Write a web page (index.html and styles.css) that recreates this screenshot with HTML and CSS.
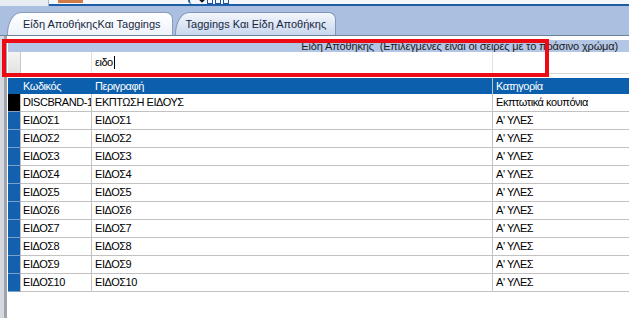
FILE: index.html
```html
<!doctype html>
<html>
<head>
<title>Είδη Αποθήκης</title>
<link rel="stylesheet" href="styles.css">
</head>
<body>
    <div class="top">
        <div class="top-left"></div>
        <div class="top-main">
            <span class="orange"></span>
            <span class="bend"></span>
            <span class="diamond"></span>
            <span class="sq"></span><span class="sq"></span><span class="sq"></span>
        </div>
    </div>
    <div class="tabstrip">
        <div class="tab active">Είδη ΑποθήκηςΚαι Taggings</div>
        <div class="tab">Taggings Και Είδη Αποθήκης</div>
    </div>
    <div class="frame">
        <div class="caption">Είδη Αποθήκης&nbsp; (Επιλεγμένες είναι οι σειρές με το πράσινο χρώμα)</div>
        <div class="grid filter">
            <div class="cell sel"></div>
            <div class="cell"></div>
            <div class="cell">ειδο<span class="caret"></span></div>
            <div class="cell last"></div>
        </div>
        <div class="gap"></div>
        <div class="grid head">
            <div class="cell ind"></div>
            <div class="cell">Κωδικός</div>
            <div class="cell">Περιγραφή</div>
            <div class="cell last">Κατηγορία</div>
        </div>
        <div class="grid row">
            <div class="cell ind current"></div>
            <div class="cell">DISCBRAND-1</div>
            <div class="cell">ΕΚΠΤΩΣΗ ΕΙΔΟΥΣ</div>
            <div class="cell last">Εκπτωτικά κουπόνια</div>
        </div>
        <div class="grid row">
            <div class="cell ind"></div>
            <div class="cell">ΕΙΔΟΣ1</div>
            <div class="cell">ΕΙΔΟΣ1</div>
            <div class="cell last">Α' ΥΛΕΣ</div>
        </div>
        <div class="grid row">
            <div class="cell ind"></div>
            <div class="cell">ΕΙΔΟΣ2</div>
            <div class="cell">ΕΙΔΟΣ2</div>
            <div class="cell last">Α' ΥΛΕΣ</div>
        </div>
        <div class="grid row">
            <div class="cell ind"></div>
            <div class="cell">ΕΙΔΟΣ3</div>
            <div class="cell">ΕΙΔΟΣ3</div>
            <div class="cell last">Α' ΥΛΕΣ</div>
        </div>
        <div class="grid row">
            <div class="cell ind"></div>
            <div class="cell">ΕΙΔΟΣ4</div>
            <div class="cell">ΕΙΔΟΣ4</div>
            <div class="cell last">Α' ΥΛΕΣ</div>
        </div>
        <div class="grid row">
            <div class="cell ind"></div>
            <div class="cell">ΕΙΔΟΣ5</div>
            <div class="cell">ΕΙΔΟΣ5</div>
            <div class="cell last">Α' ΥΛΕΣ</div>
        </div>
        <div class="grid row">
            <div class="cell ind"></div>
            <div class="cell">ΕΙΔΟΣ6</div>
            <div class="cell">ΕΙΔΟΣ6</div>
            <div class="cell last">Α' ΥΛΕΣ</div>
        </div>
        <div class="grid row">
            <div class="cell ind"></div>
            <div class="cell">ΕΙΔΟΣ7</div>
            <div class="cell">ΕΙΔΟΣ7</div>
            <div class="cell last">Α' ΥΛΕΣ</div>
        </div>
        <div class="grid row">
            <div class="cell ind"></div>
            <div class="cell">ΕΙΔΟΣ8</div>
            <div class="cell">ΕΙΔΟΣ8</div>
            <div class="cell last">Α' ΥΛΕΣ</div>
        </div>
        <div class="grid row">
            <div class="cell ind"></div>
            <div class="cell">ΕΙΔΟΣ9</div>
            <div class="cell">ΕΙΔΟΣ9</div>
            <div class="cell last">Α' ΥΛΕΣ</div>
        </div>
        <div class="grid row">
            <div class="cell ind"></div>
            <div class="cell">ΕΙΔΟΣ10</div>
            <div class="cell">ΕΙΔΟΣ10</div>
            <div class="cell last">Α' ΥΛΕΣ</div>
        </div>
    </div>
    <div class="highlight"></div>
</body>
</html>
```

FILE: styles.css
```css
html, body
{
    margin:0;
    padding:0;
}
body
{
    position:relative;
    width:629px;
    height:318px;
    overflow:hidden;
    background:#fff;
    font-family:"Liberation Sans", Arial, sans-serif;
    font-size:11px;
    color:#000;
}

/* top toolbar fragment */
.top
{
    display:flex;
    height:6px;
}
.top-left
{
    width:48px;
    background:#e8edf3;
    border-right:1px solid #a9b3c0;
}
.top-main
{
    flex:1;
    display:flex;
    align-items:flex-start;
    background:#f4f7fc;
    border-bottom:2px solid #1d5ca6;
}
.orange
{
    width:25px;
    height:3px;
    margin-left:9px;
    background:#d27a45;
}
.bend
{
    width:6px;
    height:4px;
    margin-left:105px;
    border-left:2px solid #1d5ca6;
    border-bottom-left-radius:4px;
}
.diamond
{
    width:4px;
    height:4px;
    margin:-2px 3px 0 4px;
    background:#111;
    transform:rotate(45deg);
}
.sq
{
    width:4px;
    height:3px;
    margin-right:2px;
    border:1px solid #1d4f9a;
    border-top:none;
}

/* tabs */
.tabstrip
{
    display:flex;
    align-items:flex-end;
    height:29px;
    padding-left:7px;
    background:#abc0e0;
    border-bottom:1px solid #6f819b;
}
.tab
{
    height:22px;
    line-height:22px;
    padding:0 9px 0 10px;
    margin-right:2px;
    font-size:11px;
    color:#15283f;
    background:linear-gradient(#f3f6fc, #c9d7ee);
    border:1px solid #8196bb;
    border-bottom:none;
    border-radius:14px 7px 0 0 / 22px 7px 0 0;
}
.tab.active
{
    padding:0 11px 0 15px;
    background:linear-gradient(#fff, #eef3fa);
    border-color:#8a9cba;
}

/* grid area */
.frame
{
    height:282px;
    padding:4px 0 0 8px;
    box-sizing:border-box;
    background:linear-gradient(to right, #d5d9df 0, #d5d9df 4px, #9ea4ad 4px, #9ea4ad 7px, #fff 7px) no-repeat;
    background-size:8px 100%;
}
.caption
{
    height:12px;
    line-height:12px;
    padding-right:11px;
    text-align:right;
    letter-spacing:-0.15px;
    background:#b3c6e6;
    color:#1b1b1b;
    white-space:nowrap;
}
.grid
{
    display:grid;
    grid-template-columns:13px 71px 401px 1fr;
}
.cell
{
    box-sizing:border-box;
    padding-left:2px;
    border-right:1px solid #c2c2c2;
    letter-spacing:-0.45px;
    white-space:nowrap;
    overflow:hidden;
}
.cell:nth-child(3),
.cell.last
{
    padding-left:3px;
}
.cell.last
{
    border-right:none;
}

.filter
{
    height:21px;
    border-bottom:1px solid #d6d6d6;
}
.filter .cell
{
    line-height:21px;
    border-right-color:#e2e2e2;
}
.filter .sel
{
    background:linear-gradient(#f4f4f4, #e2e2e2);
    border-right:1px solid #c8c8c8;
}
.caret
{
    display:inline-block;
    width:1px;
    height:13px;
    margin-left:1px;
    vertical-align:-3px;
    background:#000;
}
.gap
{
    height:4px;
}

.head
{
    height:16px;
    line-height:16px;
    background:#0c5fac;
    color:#fff;
}
.head .cell
{
    border-right-color:#0c5fac;
}
.head .cell:nth-child(3)
{
    border-right-color:#c2c2c2;
}

.row
{
    height:18px;
    line-height:17px;
}
.row .cell
{
    border-bottom:1px solid #c2c2c2;
}
.row .ind
{
    background:#1260ae;
    border-bottom-color:#7f9fc6;
}
.row .ind.current
{
    background:#000;
}

/* red annotation frame */
.highlight
{
    position:absolute;
    left:2px;
    top:39px;
    width:547px;
    height:38px;
    box-sizing:border-box;
    border:4px solid #ec0a14;
}
```
